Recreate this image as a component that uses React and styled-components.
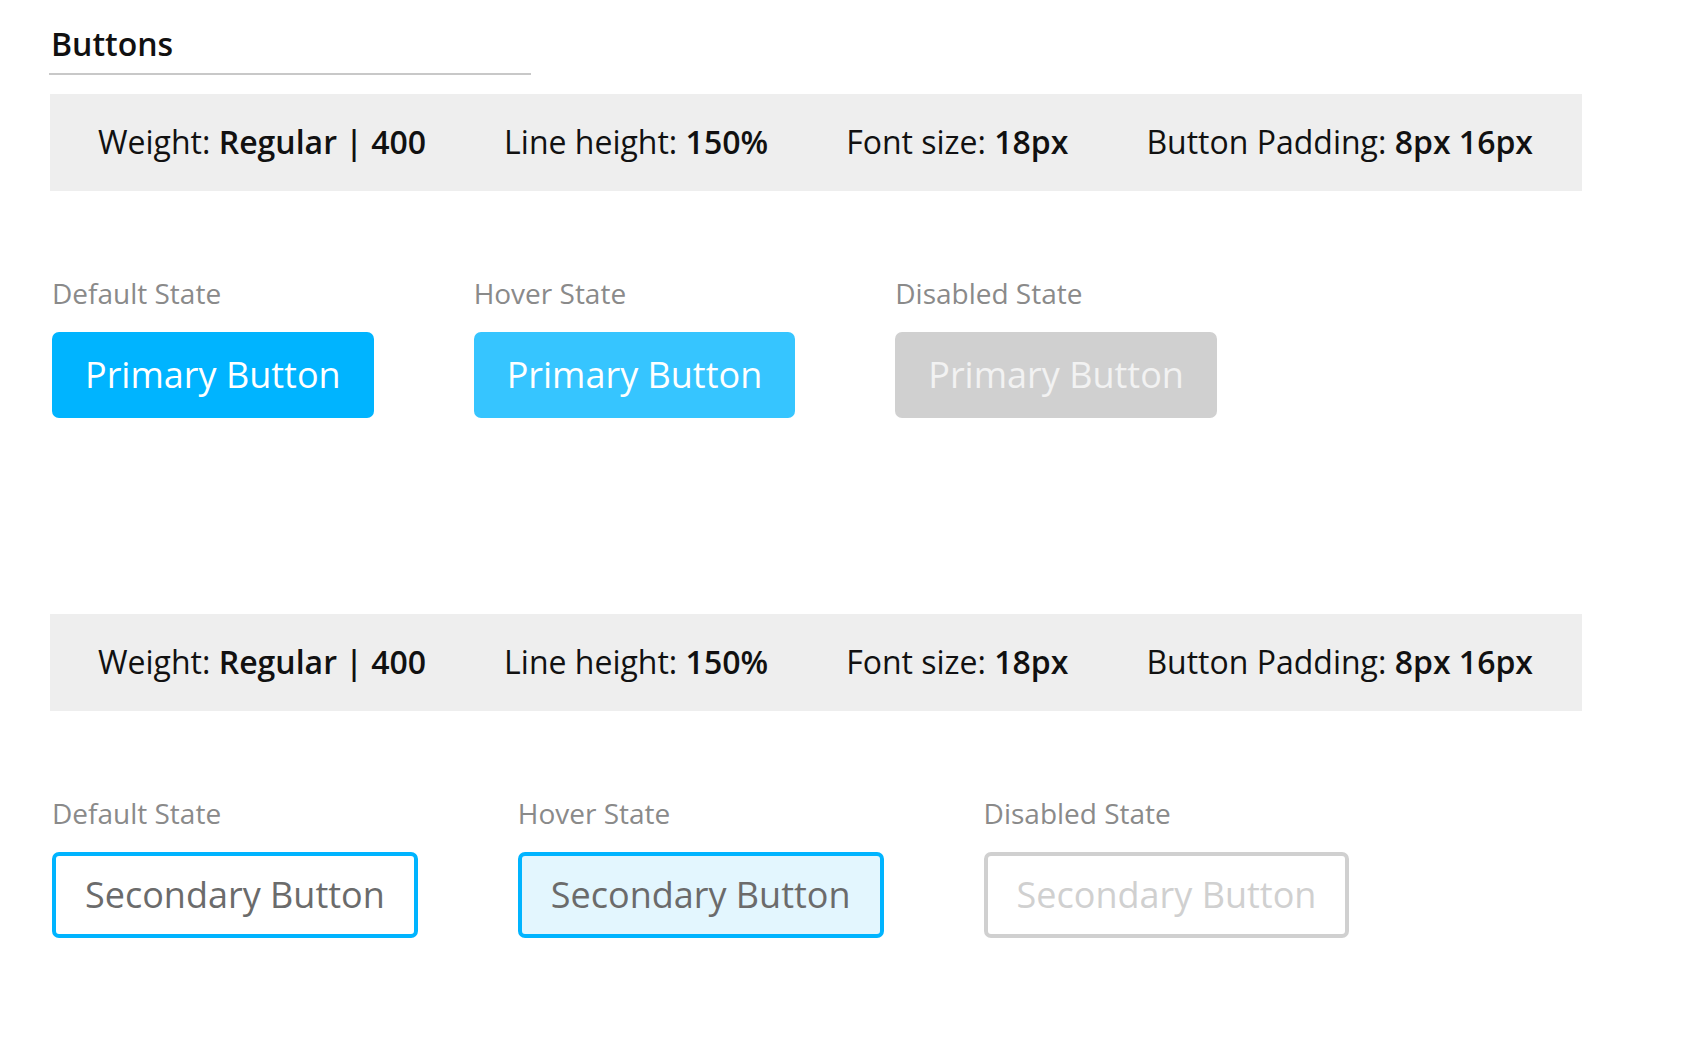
import React from 'react';
import styled, { createGlobalStyle, css } from 'styled-components';

const GlobalStyle = createGlobalStyle`
    body {
        margin: 0;
        background: #ffffff;
        font-family: "Open Sans", "Liberation Sans", sans-serif;
        color: #111111;
    }
`;

const Page = styled.div`
    padding: 20px 0 0 50px;
`;

const Title = styled.h2`
    box-sizing: border-box;
    width: 482px;
    margin: 0 0 19px -1px;
    padding: 0 0 5px 2px;
    font-size: 32px;
    line-height: 48px;
    font-weight: 600;
    color: #111111;
    border-bottom: 2px solid #c8c8c8;
`;

const Section = styled.section`
    margin-bottom: 196px;

    &:last-of-type {
        margin-bottom: 0;
    }
`;

const InfoBar = styled.div`
    box-sizing: border-box;
    width: 1532px;
    display: flex;
    justify-content: space-between;
    padding: 24px 49px 25px 48px;
    background: #eeeeee;
    font-size: 32px;
    line-height: 48px;
    color: #111111;
    white-space: nowrap;
`;

const Value = styled.b`
    font-weight: 600;
`;

const StateRow = styled.div`
    display: flex;
    gap: 100px;
    margin-top: 81px;
    padding-left: 2px;
`;

const StateColumn = styled.div`
    display: flex;
    flex-direction: column;
    align-items: flex-start;
`;

const StateLabel = styled.div`
    font-size: 28px;
    line-height: 42px;
    color: #8a8a8a;
    margin-bottom: 18px;
`;

const primaryColors = {
    default: css`background: #00b4ff; color: #ffffff;`,
    hover: css`background: #36c5ff; color: #ffffff;`,
    disabled: css`background: #d0d0d0; color: #f2f2f2;`,
};

const secondaryColors = {
    default: css`background: #ffffff; border-color: #00b4ff; color: #6b6b6b;`,
    hover: css`background: #e3f6fe; border-color: #00b4ff; color: #6b6b6b;`,
    disabled: css`background: #ffffff; border-color: #d0d0d0; color: #d0d0d0;`,
};

const Button = styled.button`
    font-family: "Open Sans", "Liberation Sans", sans-serif;
    font-size: 36px;
    line-height: 54px;
    font-weight: 400;
    border-radius: 7px;
    white-space: nowrap;
    cursor: pointer;
    ${(p) => p.$variant === 'secondary'
        ? css`
            padding: 12px 29px;
            border: 4px solid;
            ${secondaryColors[p.$state]}
        `
        : css`
            padding: 16px 33px;
            border: none;
            ${primaryColors[p.$state]}
        `}
`;

const states = [
    { key: 'default', label: 'Default State' },
    { key: 'hover', label: 'Hover State' },
    { key: 'disabled', label: 'Disabled State' },
];

const Info = () => (
    <InfoBar>
        <span>Weight: <Value>Regular | 400</Value></span>
        <span>Line height: <Value>150%</Value></span>
        <span>Font size: <Value>18px</Value></span>
        <span>Button Padding: <Value>8px 16px</Value></span>
    </InfoBar>
);

const ButtonGroup = ({ variant, text }) => (
    <Section>
        <Info />
        <StateRow>
            {states.map((s) => (
                <StateColumn key={s.key}>
                    <StateLabel>{s.label}</StateLabel>
                    <Button
                        $variant={variant}
                        $state={s.key}
                        disabled={s.key === 'disabled'}
                    >
                        {text}
                    </Button>
                </StateColumn>
            ))}
        </StateRow>
    </Section>
);

export default function App() {
    return (
        <Page>
            <GlobalStyle />
            <Title>Buttons</Title>
            <ButtonGroup variant="primary" text="Primary Button" />
            <ButtonGroup variant="secondary" text="Secondary Button" />
        </Page>
    );
}
